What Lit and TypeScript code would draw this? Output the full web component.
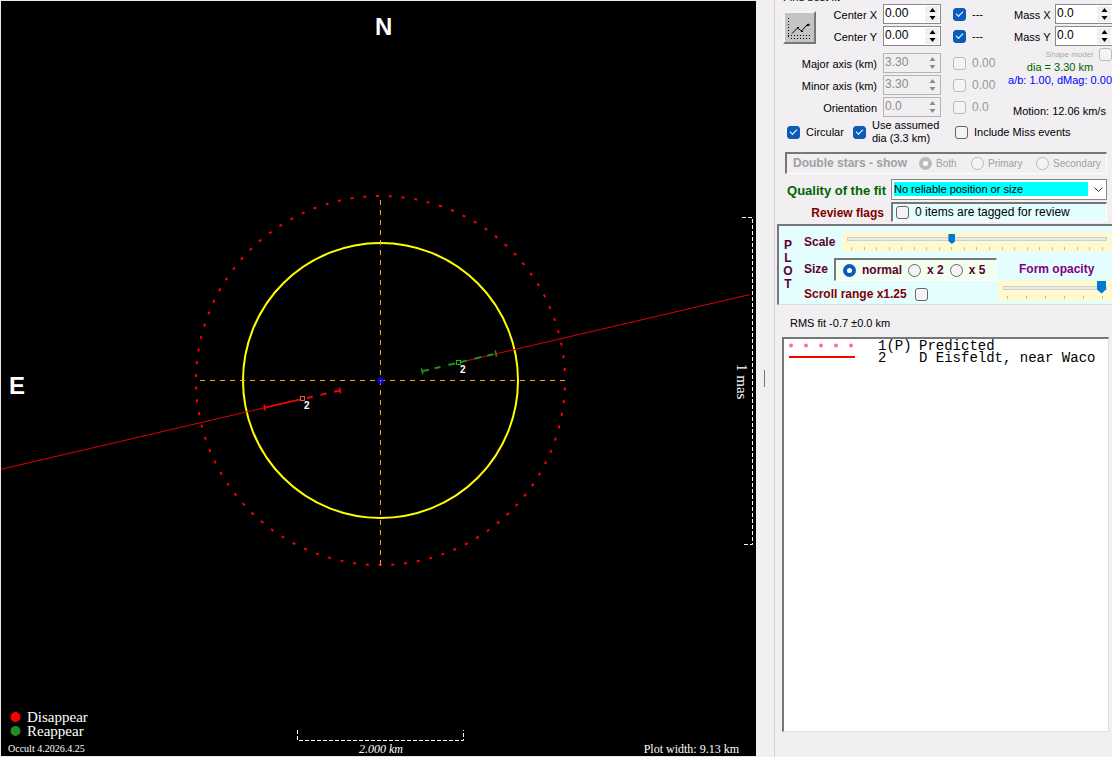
import { LitElement, html, css, svg } from "lit";
import { customElement, property } from "lit/decorators.js";

@customElement("number-spin")
class NumberSpin extends LitElement {
  @property() value = "0.0";
  @property() label = "";
  @property({ type: Boolean }) disabled = false;

  static styles = css`
    :host {
      display: block;
      height: 20px;
      box-sizing: border-box;
      border: 1px solid #8a8a8a;
      background: #fff;
    }
    :host([disabled]) {
      background: #f1eff1;
      border-color: #b4b4b4;
    }
    .box {
      display: flex;
      height: 100%;
    }
    .field {
      flex: 1;
      min-width: 0;
      border: 0;
      padding: 0 0 2px 1px;
      background: none;
      font: 12px "Liberation Sans", Arial, sans-serif;
      color: #000;
    }
    .field:disabled {
      color: #8c8c8c;
    }
    .arrows {
      display: flex;
      flex-direction: column;
      width: 14px;
      padding: 1px;
      gap: 1px;
    }
    .arrow {
      flex: 1;
      display: grid;
      place-items: center;
      padding: 0;
      border: 0;
      background: #efefef;
      color: #000;
      min-height: 0;
    }
    .arrow:disabled {
      background: none;
      color: #8c8c8c;
    }
    .glyph {
      display: block;
      width: 7px;
      height: 4px;
      fill: currentColor;
    }
  `;

  render() {
    return html`<div class="box">
      <input class="field" aria-label=${this.label} .value=${this.value} ?disabled=${this.disabled} />
      <div class="arrows">
        <button class="arrow" aria-label="Increase" ?disabled=${this.disabled}>
          <svg class="glyph" viewBox="0 0 7 4"><path d="M3.5 0 6.5 4h-6z" /></svg>
        </button>
        <button class="arrow" aria-label="Decrease" ?disabled=${this.disabled}>
          <svg class="glyph" viewBox="0 0 7 4"><path d="M.5 0h6L3.5 4z" /></svg>
        </button>
      </div>
    </div>`;
  }
}

@customElement("occultation-plot")
class OccultationPlot extends LitElement {
  static styles = css`
    :host {
      display: block;
      background: #000;
      border: 1px solid #e8e8e8;
      border-right: 0;
      box-sizing: border-box;
      min-width: 0;
    }
    .canvas {
      display: block;
      width: 100%;
      height: 100%;
    }
    .compass {
      font: bold 24px "Liberation Sans", Arial, sans-serif;
      fill: #fff;
    }
    .serif {
      font-family: "Liberation Serif", "Times New Roman", serif;
      fill: #fff;
    }
    .large {
      font-size: 15px;
    }
    .medium {
      font-size: 12px;
    }
    .small {
      font-size: 10px;
    }
    .italic {
      font-style: italic;
    }
    .tag {
      font: bold 10px "Liberation Sans", Arial, sans-serif;
      fill: #fff;
    }
    .axis {
      stroke: #ffa500;
      stroke-dasharray: 5 5;
      fill: none;
    }
    .ruler {
      stroke: #fff;
      stroke-dasharray: 4 2;
      fill: none;
    }
    .chord {
      stroke: #e00000;
      fill: none;
    }
  `;

  render() {
    return html`<svg class="canvas" viewBox="1 1 755 755" role="img" aria-label="Occultation chord plot">
      ${svg`
      <circle cx="380.5" cy="380.5" r="184.5" fill="none" stroke="#f00" stroke-width="2" stroke-dasharray="3 9.8" stroke-dashoffset="-7"/>
      <circle cx="380.5" cy="380.5" r="137.5" fill="none" stroke="#ff0" stroke-width="2"/>
      <path class="axis" d="M200 380.5H566M380.5 565V199"/>
      <circle cx="380.5" cy="380.5" r="2" fill="none" stroke="#00f" stroke-width="2"/>
      <path class="chord" d="M0 469.5 302 399M459 362.5 750 294.5"/>
      <path d="M265 407.5 302 399" stroke="#f00" stroke-width="1.6"/>
      <path d="M302 399 340 390.5" stroke="#f00" stroke-width="2" stroke-dasharray="6 8" stroke-dashoffset="-5"/>
      <path d="M264 404.5l1.4 6M339.4 387.5l1.4 6" stroke="#f00" stroke-width="1.6"/>
      <path d="M422 371.3 459 362.5 496 353.5" fill="none" stroke="#228b22" stroke-width="2" stroke-dasharray="7 6 6 8"/>
      <path d="M421.4 368.3l1.4 6M495.2 350.5l1.4 6" stroke="#228b22" stroke-width="1.6"/>
      <rect x="300.5" y="396.5" width="4" height="4" fill="#000" stroke="#e0604c"/>
      <rect x="456.5" y="360.5" width="4" height="4" fill="#000" stroke="#00c800"/>
      <text class="tag" x="304" y="409">2</text>
      <text class="tag" x="460" y="373">2</text>
      <text class="compass" x="375" y="35">N</text>
      <text class="compass" x="9" y="394">E</text>
      <path class="ruler" d="M297.5 730V740.5H463.5V730"/>
      <path class="ruler" d="M742 217.5H752.5V544.5H742"/>
      <text class="serif large" transform="translate(737 364) rotate(90)">1 mas</text>
      <circle cx="15.5" cy="717" r="5" fill="#f00"/>
      <circle cx="15.5" cy="731" r="5" fill="#228b22"/>
      <text class="serif large" x="27" y="722">Disappear</text>
      <text class="serif large" x="27" y="736">Reappear</text>
      <text class="serif small" x="8" y="752">Occult 4.2026.4.25</text>
      <text class="serif medium italic" x="381" y="753" text-anchor="middle">2.000 km</text>
      <text class="serif medium" x="739" y="753" text-anchor="end">Plot width: 9.13 km</text>`}
    </svg>`;
  }
}

@customElement("app-root")
class AppRoot extends LitElement {
  static styles = css`
    :host {
      display: flex;
      height: 100vh;
      overflow: hidden;
      background: #f1eff1;
      color: #000;
      font: 11px/13px "Liberation Sans", Arial, sans-serif;
    }
    occultation-plot {
      flex: 1;
    }
    .splitter {
      flex: 0 0 19px;
      display: flex;
      align-items: center;
      padding-left: 8px;
      box-sizing: border-box;
      border-right: 1px solid #d0d0d0;
    }
    .grip {
      width: 1px;
      height: 17px;
      background: #777;
    }
    .panel {
      flex: 0 0 337px;
      display: flex;
      flex-direction: column;
      overflow: hidden;
      box-sizing: border-box;
    }
    .caption {
      display: flex;
      align-items: flex-end;
      height: 4px;
      padding-left: 8px;
    }
    .fit {
      display: flex;
      padding-left: 8px;
    }
    .chart {
      width: 33px;
      height: 33px;
      margin-top: 7px;
      padding: 0;
      border: 2px solid;
      border-color: #f4f4f4 #777 #777 #f4f4f4;
      background: #c4c4c4;
    }
    .chart-icon {
      display: block;
      width: 29px;
      height: 29px;
    }
    .params {
      flex: 1;
      display: grid;
      grid-template-columns: 1fr 58px 25px 42px;
      grid-template-rows: 20px 20px 3px 20px 20px 20px;
      align-items: center;
      gap: 2px 0;
      margin-left: -18px;
    }
    .name {
      text-align: right;
      padding-right: 6px;
      padding-top: 2px;
    }
    .tick {
      justify-self: end;
    }
    .readout {
      padding-left: 6px;
      padding-top: 1px;
      white-space: nowrap;
    }
    .off {
      color: #999;
      font-size: 12px;
    }
    .spacer {
      grid-column: 1 / -1;
    }
    .mass {
      flex: 0 0 104px;
      display: flex;
      flex-direction: column;
    }
    .mass-row {
      display: grid;
      grid-template-columns: 36px 58px;
      justify-content: end;
      gap: 5px;
      align-items: center;
      margin-bottom: 2px;
      margin-right: -1px;
      white-space: nowrap;
    }
    .name-mass {
      padding-top: 2px;
    }
    .shape {
      display: flex;
      justify-content: flex-end;
      align-items: center;
      gap: 6px;
      height: 13px;
      font-size: 8px;
      color: #a8a8a8;
    }
    .dia {
      color: #006400;
      text-align: center;
    }
    .ratio {
      color: #00f;
      white-space: nowrap;
      text-align: right;
    }
    .motion {
      padding: 18px 0 0 5px;
      white-space: nowrap;
    }
    .check,
    .radio {
      appearance: none;
      flex: none;
      width: 13px;
      height: 13px;
      margin: 0;
      border: 1px solid #666;
      border-radius: 3px;
      background: #f6f3f6;
      box-sizing: border-box;
      display: grid;
      place-items: center;
    }
    .radio {
      border-radius: 50%;
    }
    .check:disabled,
    .radio:disabled {
      border-color: #bbb;
    }
    .check:checked {
      border-color: #0a5cb8;
      background: #0a5cb8;
    }
    .check:checked::after {
      content: "";
      width: 6px;
      height: 3px;
      border: solid #fff;
      border-width: 0 0 1px 1px;
      transform: translateY(-1px) rotate(-45deg);
    }
    .radio:checked {
      border: 4px solid #0a5cb8;
      background: #fff;
    }
    .radio:checked:disabled {
      border-color: #bbb;
    }
    .option {
      display: flex;
      align-items: center;
      gap: 6px;
      white-space: nowrap;
    }
    .options {
      display: grid;
      grid-template-columns: 66px 102px auto;
      justify-content: start;
      align-items: center;
      height: 26px;
      margin: 1px 0 0 12px;
    }
    .sunken {
      display: flex;
      align-items: center;
      box-sizing: border-box;
      border: solid #fff;
      border-width: 2px 1px 1px 2px;
      border-top-color: #777;
      border-left-color: #777;
    }
    .doubles {
      height: 22px;
      margin: 7px 5px 0 10px;
      padding-left: 6px;
      color: #a0a0a0;
      font-size: 10px;
    }
    .doubles .option {
      gap: 4px;
    }
    .bold {
      font-size: 12px;
      font-weight: bold;
    }
    .star-title {
      width: 126px;
    }
    .star-both {
      width: 52px;
    }
    .star-primary {
      width: 65px;
    }
    .quality {
      display: grid;
      grid-template-columns: 101px 1fr;
      column-gap: 5px;
      row-gap: 2px;
      align-items: center;
      margin: 5px 5px 0 10px;
    }
    .heading {
      text-align: right;
      font-weight: bold;
      white-space: nowrap;
      padding-top: 2px;
    }
    .fit-heading {
      font-size: 13px;
      color: #006400;
    }
    .flag-heading {
      font-size: 12px;
      color: #800000;
      padding-right: 2px;
    }
    .combo {
      position: relative;
      display: block;
    }
    .select {
      appearance: none;
      display: block;
      width: 100%;
      height: 21px;
      box-sizing: border-box;
      padding: 2px 18px 3px 2px;
      border: 1px solid #888;
      border-radius: 0;
      background: #0ff content-box;
      outline: 0;
      color: #000;
      font: 11px "Liberation Sans", Arial, sans-serif;
    }
    .chevron {
      position: absolute;
      right: 4px;
      top: 8px;
      width: 9px;
      height: 6px;
      fill: none;
      stroke: #333;
      pointer-events: none;
    }
    .combo,
    .list {
      background: #fff;
    }
    .flags {
      height: 20px;
      padding-left: 3px;
      background: #e4fdff;
      font-size: 12px;
    }
    .plot {
      display: grid;
      grid-template-columns: 24px 1fr;
      height: 81px;
      margin: 2px 0 0 2px;
      box-sizing: border-box;
      border: 2px solid #777;
      border-width: 2px 0 1px 2px;
      border-bottom-color: #ddd;
      background: #e4fdff;
      color: #600030;
      font-weight: bold;
      font-size: 12px;
    }
    .vertical {
      display: flex;
      flex-direction: column;
      align-items: center;
      padding-top: 13px;
      padding-right: 6px;
    }
    .controls {
      display: flex;
      flex-direction: column;
      padding-left: 1px;
      min-width: 0;
    }
    .scale {
      display: flex;
      align-items: center;
      margin-top: 6px;
    }
    .scale-name {
      width: 38px;
    }
    .slider {
      flex: 1;
      display: flex;
      flex-direction: column;
      height: 20px;
      padding: 0 5px;
      background: #fff9d0;
      min-width: 0;
    }
    .low {
      flex: none;
      height: 21px;
    }
    .range {
      appearance: none;
      display: block;
      width: 100%;
      height: 14px;
      margin: 0;
      background: none;
    }
    .tall {
      height: 15px;
    }
    .range::-webkit-slider-runnable-track {
      height: 4px;
      box-sizing: border-box;
      border: 1px solid #d0d0d0;
      background: #e8eaea;
    }
    .range::-webkit-slider-thumb {
      appearance: none;
      width: 7px;
      height: 10px;
      margin-top: -4px;
      background: #0078d7;
      clip-path: polygon(0 0, 100% 0, 100% 70%, 50% 100%, 0 70%);
    }
    .tall::-webkit-slider-thumb {
      width: 9px;
      height: 13px;
      margin-top: -6px;
    }
    .marks {
      display: flex;
      justify-content: space-between;
      padding: 1px 4px 0;
    }
    .mark {
      width: 1px;
      height: 3px;
      background: #c4bfa8;
    }
    .lower {
      flex: 1;
      display: flex;
      justify-content: space-between;
    }
    .left {
      display: flex;
      flex-direction: column;
      padding-top: 6px;
      gap: 7px;
    }
    .right {
      display: flex;
      flex-direction: column;
      justify-content: space-between;
      width: 114px;
      padding-bottom: 3px;
    }
    .size {
      display: flex;
      align-items: center;
      gap: 6px;
    }
    .sizes {
      height: 23px;
      width: 163px;
      padding-left: 7px;
      background: #f0fff0;
      gap: 6px;
    }
    .scroll {
      color: #800000;
      gap: 8px;
    }
    .opacity {
      color: #800080;
      padding: 11px 0 0 21px;
    }
    .rms {
      padding: 12px 0 0 15px;
    }
    .list {
      flex: 1;
      min-height: 0;
      margin: 7px 3px 25px 7px;
      border: 2px solid #777;
      border-width: 2px 1px 1px 2px;
      border-right-color: #e0e0e0;
      border-bottom-color: #e0e0e0;
      font: 14px/12px "Liberation Mono", "Courier New", monospace;
    }
    .table {
      border-collapse: collapse;
      margin: 1px 0 0 5px;
    }
    .cell {
      padding: 0;
      text-align: left;
      white-space: pre;
    }
    .key {
      width: 89px;
    }
    .number {
      width: 41px;
    }
    .line {
      display: block;
      width: 67px;
      height: 8px;
    }
  `;

  private marks(count: number) {
    return html`<div class="marks">${Array.from({ length: count }, () => html`<span class="mark"></span>`)}</div>`;
  }

  private param(name: string, value: string, readout: string, enabled: boolean) {
    return html`<span class="name">${name}</span>
      <number-spin label=${name} .value=${value} ?disabled=${!enabled}></number-spin>
      <input class="check tick" type="checkbox" aria-label="Fit ${name}" .checked=${enabled} ?disabled=${!enabled} />
      <span class="readout ${enabled ? "" : "off"}">${readout}</span>`;
  }

  render() {
    return html`
      <occultation-plot></occultation-plot>
      <div class="splitter"><div class="grip"></div></div>
      <div class="panel">
        <div class="caption">Find best fit</div>
        <div class="fit">
          <button class="chart" aria-label="Plot best fit">
            <svg class="chart-icon" viewBox="0 0 29 29" fill="none" stroke="#000">
              <path stroke-dasharray="1 2" d="M3.5 5V25M3 22.5H27M6 25.5H27" />
              <path d="M7 20.5 12.5 15l4 3 6.5-7 2 1M12 14.5h2M16 18.5h2M21 12.5h3" />
            </svg>
          </button>
          <div class="params">
            ${this.param("Center X", "0.00", "---", true)} ${this.param("Center Y", "0.00", "---", true)}
            <span class="spacer"></span>
            ${this.param("Major axis (km)", "3.30", "0.00", false)}
            ${this.param("Minor axis (km)", "3.30", "0.00", false)}
            ${this.param("Orientation", "0.0", "0.0", false)}
          </div>
          <div class="mass">
            <div class="mass-row"><span class="name-mass">Mass X</span><number-spin label="Mass X" value="0.0"></number-spin></div>
            <div class="mass-row"><span class="name-mass">Mass Y</span><number-spin label="Mass Y" value="0.0"></number-spin></div>
            <label class="shape">Shape model<input class="check" type="checkbox" disabled /></label>
            <div class="dia">dia = 3.30 km</div>
            <div class="ratio">a/b: 1.00, dMag: 0.00</div>
            <div class="motion">Motion: 12.06 km/s</div>
          </div>
        </div>
        <div class="options">
          <label class="option"><input class="check" type="checkbox" checked />Circular</label>
          <label class="option"><input class="check" type="checkbox" checked /><span>Use assumed<br />dia (3.3 km)</span></label>
          <label class="option"><input class="check" type="checkbox" />Include Miss events</label>
        </div>
        <div class="sunken doubles">
          <span class="bold star-title">Double stars - show</span>
          <label class="option star-both"><input class="radio" type="radio" name="star" checked disabled />Both</label>
          <label class="option star-primary"><input class="radio" type="radio" name="star" disabled />Primary</label>
          <label class="option"><input class="radio" type="radio" name="star" disabled />Secondary</label>
        </div>
        <div class="quality">
          <label class="heading fit-heading" for="quality">Quality of the fit</label>
          <span class="combo">
            <select class="select" id="quality"><option>No reliable position or size</option></select>
            <svg class="chevron" viewBox="0 0 9 6"><path d="M.5.5l4 4 4-4" /></svg>
          </span>
          <span class="heading flag-heading">Review flags</span>
          <label class="sunken flags option"><input class="check" type="checkbox" />0 items are tagged for review</label>
        </div>
        <div class="plot">
          <div class="vertical"><span>P</span><span>L</span><span>O</span><span>T</span></div>
          <div class="controls">
            <div class="scale">
              <label class="scale-name" for="scale">Scale</label>
              <div class="slider">
                <input class="range" id="scale" type="range" min="0" max="100" value="40" />
                ${this.marks(21)}
              </div>
            </div>
            <div class="lower">
              <div class="left">
                <div class="size">Size
                  <div class="sunken sizes">
                    <label class="option"><input class="radio" type="radio" name="size" checked />normal</label>
                    <label class="option"><input class="radio" type="radio" name="size" />x 2</label>
                    <label class="option"><input class="radio" type="radio" name="size" />x 5</label>
                  </div>
                </div>
                <label class="option scroll">Scroll range x1.25<input class="check" type="checkbox" /></label>
              </div>
              <div class="right">
                <label class="opacity" for="opacity">Form opacity</label>
                <div class="slider low">
                  <input class="range tall" id="opacity" type="range" min="0" max="100" value="100" />
                  ${this.marks(6)}
                </div>
              </div>
            </div>
          </div>
        </div>
        <div class="rms">RMS fit -0.7 ±0.0 km</div>
        <div class="list">
          <table class="table">
            <tbody>
              <tr>
                <td class="cell key"><svg class="line" viewBox="0 0 67 8" fill="#ff69b4">
                  ${[2, 17, 32, 47, 62].map((x) => svg`<circle cx=${x} cy="3.5" r="2"/>`)}
                </svg></td>
                <td class="cell number">1(P)</td>
                <td class="cell">Predicted</td>
              </tr>
              <tr>
                <td class="cell key"><svg class="line" viewBox="0 0 67 8"><path d="M0 3H66" stroke="#f00" stroke-width="2" /></svg></td>
                <td class="cell number">2</td>
                <td class="cell">D Eisfeldt, near Waco</td>
              </tr>
            </tbody>
          </table>
        </div>
      </div>
    `;
  }
}
